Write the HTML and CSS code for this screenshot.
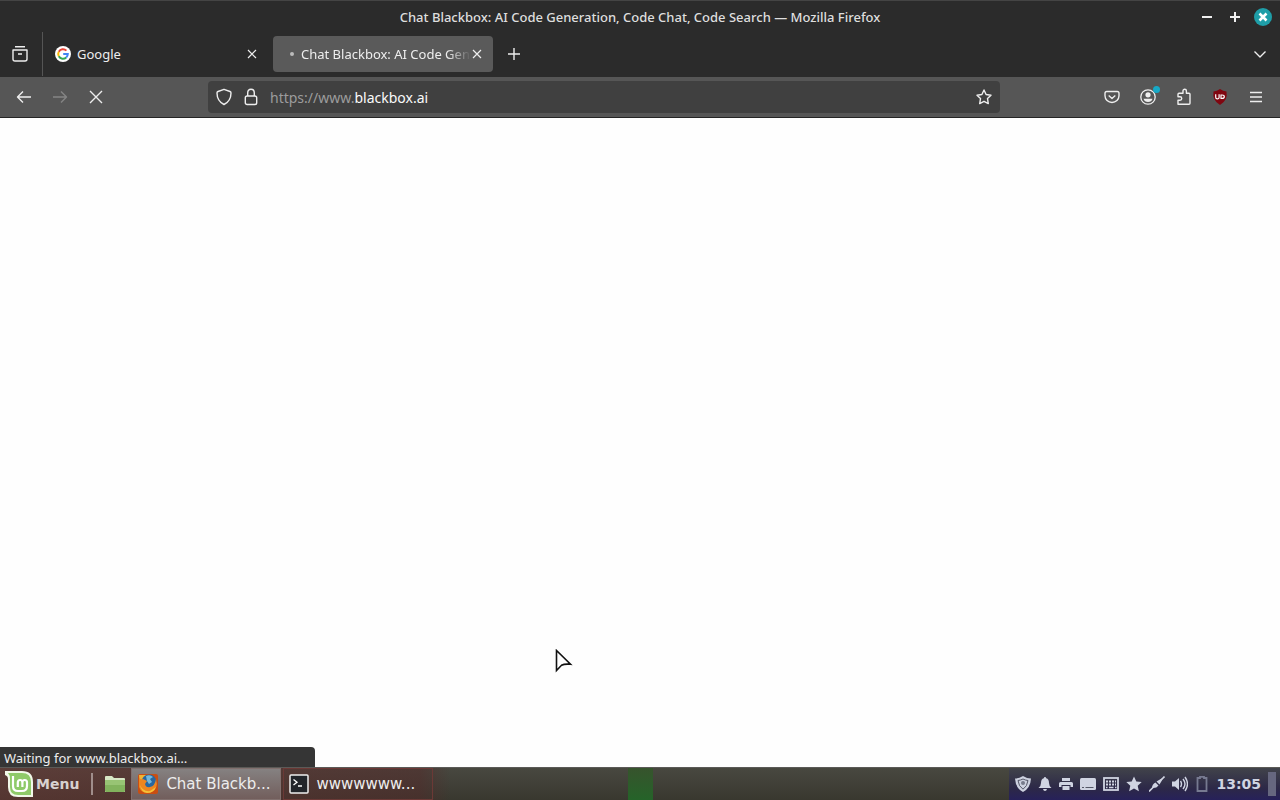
FILE: index.html
```html
<!DOCTYPE html>
<html lang="en">
<head>
<meta charset="utf-8">
<title>Chat Blackbox: AI Code Generation, Code Chat, Code Search</title>
<link rel="stylesheet" href="styles.css">
</head>
<body>
<div class="browser">
  <header class="titlebar">
    <h1 class="window-title">Chat Blackbox: AI Code Generation, Code Chat, Code Search — Mozilla Firefox</h1>
    <div class="window-controls">
      <button class="wc" aria-label="Minimize"><svg width="18" height="18" viewBox="0 0 18 18"><path d="M4 9h10" stroke="#eee" stroke-width="2"/></svg></button>
      <button class="wc" aria-label="Maximize"><svg width="18" height="18" viewBox="0 0 18 18"><path d="M4 9h10M9 4v10" stroke="#eee" stroke-width="2"/></svg></button>
      <button class="wc" aria-label="Close window"><svg width="18" height="18" viewBox="0 0 18 18"><circle cx="9" cy="9" r="9" fill="#1f9ea8"/><path d="M5.500 5.500l7 7M12.500 5.500l-7 7" stroke="#fff" stroke-width="2.600"/></svg></button>
    </div>
  </header>

  <nav class="tabstrip" aria-label="Tabs">
    <button class="recent" aria-label="Recent browsing"><svg width="18" height="18" viewBox="0 0 18 18" class="line"><path d="M4 1.800h10M2 5h14v9q0 2-2 2H4q-2 0-2-2zM7 9h4"/></svg></button>
    <div class="tab">
      <svg class="favicon" width="16" height="16" viewBox="0 0 16 16"><circle cx="8" cy="8" r="8" fill="#fff"/><g fill="none" stroke-width="2"><path d="M11.400 4.600A4.800 4.800 0 0 0 3.800 5.700" stroke="#ea4335"/><path d="M3.800 5.700a4.800 4.800 0 0 0 0 4.600" stroke="#fbbc05"/><path d="M3.800 10.300a4.800 4.800 0 0 0 7.400 1.200" stroke="#34a853"/><path d="M11.200 11.500A4.800 4.800 0 0 0 12.800 8H8.200" stroke="#4285f4"/></g></svg>
      <span class="tab-label">Google</span>
      <button class="tab-close" aria-label="Close Google tab"><svg width="10" height="10" viewBox="0 0 10 10" class="line"><path d="M1 1l8 8M9 1L1 9"/></svg></button>
    </div>
    <div class="tab active">
      <span class="loading"></span>
      <span class="tab-label faded">Chat Blackbox: AI Code Gen</span>
      <button class="tab-close" aria-label="Close Chat Blackbox tab"><svg width="10" height="10" viewBox="0 0 10 10" class="line"><path d="M1 1l8 8M9 1L1 9"/></svg></button>
    </div>
    <button class="new-tab" aria-label="New tab"><svg width="14" height="14" viewBox="0 0 14 14" class="line"><path d="M7 1v12M1 7h12"/></svg></button>
    <button class="all-tabs" aria-label="List all tabs"><svg width="14" height="14" viewBox="0 0 14 14" class="line"><path d="M1.500 4.500L7 10l5.500-5.500"/></svg></button>
  </nav>

  <div class="toolbar">
    <div class="nav-buttons">
      <button aria-label="Back"><svg width="16" height="16" viewBox="0 0 16 16" class="line"><path d="M15 8H1.500M7 2.500L1.500 8 7 13.500"/></svg></button>
      <button aria-label="Forward" disabled><svg width="16" height="16" viewBox="0 0 16 16" class="line"><path d="M1 8h13.500M9 2.500L14.500 8 9 13.500"/></svg></button>
      <button aria-label="Stop"><svg width="16" height="16" viewBox="0 0 16 16" class="line"><path d="M2 2l12 12M14 2L2 14"/></svg></button>
    </div>
    <div class="urlbar">
      <button aria-label="Tracking protection"><svg width="16" height="18" viewBox="0 0 16 18" class="line"><path d="M8 1.300l6 2.200q1 .4 1 1.500C15 10 12 14.500 8 16.500 4 14.500 1 10 1 5q0-1.100 1-1.500z"/></svg></button>
      <button aria-label="Site information"><svg width="14" height="18" viewBox="0 0 14 18" class="line"><rect x="1.300" y="8" width="11.400" height="8.500" rx="1.800"/><path d="M3.700 8V5q0-3.700 3.300-3.700T10.300 5v3"/></svg></button>
      <a class="address" href="#page"><span>https://www.</span>blackbox.ai</a>
      <button aria-label="Bookmark this page"><svg width="16" height="16" viewBox="0 0 16 16" class="line"><path d="M8 1l2.100 4.500 4.900.7-3.500 3.400.8 5L8 12.300l-4.300 2.300.8-5L1 6.200l4.900-.7z"/></svg></button>
    </div>
    <div class="tools">
      <button aria-label="Save to Pocket"><svg width="16" height="16" viewBox="0 0 16 16" class="line"><path d="M2.800 2.500h10.400q1.800 0 1.800 1.800v2.500a7 6.700 0 0 1-14 0V4.300q0-1.800 1.800-1.800zM4.700 6.500L8 9.500l3.300-3"/></svg></button>
      <button class="account" aria-label="Account"><svg width="16" height="16" viewBox="0 0 16 16"><circle cx="8" cy="8" r="7.200" fill="none" stroke="#eee" stroke-width="1.300"/><circle cx="8" cy="5.800" r="2.600" fill="#eee"/><path d="M3.500 9.800h9Q11.500 13 8 13T3.500 9.800z" fill="#eee"/></svg><span class="badge"></span></button>
      <button aria-label="Extensions"><svg width="16" height="18" viewBox="0 0 16 18" class="line"><path d="M2 16.200V12.300h2a1.700 1.700 0 0 0 0-3.500H2V6.300q0-1 1-1h4V3a1.700 1.700 0 0 1 3.400 0v2.300H13q1 0 1 1v9q0 .9-1 .9z"/></svg></button>
      <button aria-label="uBlock Origin"><svg width="16" height="16" viewBox="0 0 16 16"><path d="M8 0q3 2 6.500 2.500Q16 11.500 8 16 0 11.500 1.500 2.500 5 2 8 0z" fill="#800610"/><path d="M3.700 5.300v2.900q0 1.600 1.700 1.600T7.100 8.200V5.300M9 6h1q2.300 0 2.300 1.700T10 9.400H9z" fill="none" stroke="#fff" stroke-width="1.200"/></svg></button>
      <button aria-label="Application menu"><svg width="14" height="14" viewBox="0 0 14 14" class="line"><path d="M1 2.500h12M1 7h12M1 11.500h12"/></svg></button>
    </div>
  </div>

  <main class="page" id="page">
    <svg class="pointer" width="18" height="24" viewBox="0 0 18 24"><path d="M1.500 1.500v20l5-5.200q3-1.600 9-1z" fill="#fff" stroke="#111" stroke-width="1.600"/></svg>
    <div class="status" role="status">Waiting for www.blackbox.ai…</div>
  </main>
</div>

<footer class="taskbar">
  <button class="menu"><svg width="30" height="28" viewBox="0 0 30 28"><path d="M1 1h17q11 0 11 11v15H14Q4 27 4 17V9Q4 6 1 5z" fill="#f2f8e9"/><path d="M4 3h14q9 0 9 9v13H14q-8 0-8-8V9Q6 5 4 3z" fill="#8fca69"/><path d="M9 6v10q0 5 5 5h4q5 0 5-5v-3.500q0-2.500-2.300-2.500t-2.300 2.500V17v-4.500q0-2.500-2.300-2.500t-2.300 2.500V17" fill="none" stroke="#fff" stroke-width="2.200"/></svg>Menu</button>
  <span class="divider"></span>
  <button class="files" aria-label="Files"><svg width="22" height="20" viewBox="0 0 22 20"><path d="M1 3q0-1 1-1h6l2 2h10q1 0 1 1v13H1z" fill="#d7e7c5"/><path d="M1 6h20v11q0 1-1 1H2q-1 0-1-1z" fill="#82b35d"/><path d="M1 6h20v5H1z" fill="#98c474"/></svg></button>
  <button class="task current"><svg width="22" height="22" viewBox="0 0 22 22"><rect x="1" y="1" width="20" height="20" rx="2" fill="#c94e12"/><path d="M2 2h8L6 7 3 15z" fill="#efb434"/><circle cx="12" cy="9" r="7.500" fill="#2867a0"/><path d="M9 3q4-2 7 1l-3 2 2 3-3 2-2-3z" fill="#73b8dc"/><path d="M2 5q2 2 4 1l4 2-2 3q1 4 5 3 5-1 6-8 3 10-5 13-9 3-12-5z" fill="#ed8620"/><path d="M3 12q3 7 10 6l6-4q-2 6-9 6-6-1-7-8z" fill="#f5c239"/></svg><span>Chat Blackb...</span></button>
  <button class="task"><svg width="20" height="20" viewBox="0 0 20 20"><rect x="1" y="1" width="18" height="18" rx="1" fill="#22252a" stroke="#eee" stroke-width="1.500"/><path d="M4.500 5.500L8 8.200 4.500 11M9 12h4" fill="none" stroke="#fff" stroke-width="1.300"/></svg><span>wwwwwww...</span></button>
  <span class="load"></span>
  <div class="tray">
    <svg width="16" height="16" viewBox="0 0 16 16"><path d="M8 0q4 2.500 8 2.500Q15.500 12 8 16 .5 12 0 2.500 4 2.500 8 0z" fill="#cdd1df"/><path d="M8 3q2.500 1.300 5 1.500-.7 6-5 8.700-4.300-2.700-5-8.700Q5.500 4.300 8 3z" fill="none" stroke="#555767"/><circle cx="8" cy="7" r="2" fill="#777b8b"/></svg>
    <svg width="14" height="16" viewBox="0 0 14 16" class="fill"><path d="M7 1q1 0 1.200 1.300Q11 3 11 7q0 3 2.500 5H.5Q3 10 3 7q0-4 2.800-4.700Q6 1 7 1zM5 13h4q-.5 2-2 2t-2-2z"/></svg>
    <svg width="14" height="16" viewBox="0 0 14 16" class="fill"><path d="M3 2h8v3H3zM1.500 6h11Q14 6 14 7.500V11h-2.500V9h-9v2H0V7.500Q0 6 1.500 6zM3.500 10h7v4h-7z"/></svg>
    <svg width="16" height="16" viewBox="0 0 16 16"><rect y="2" width="16" height="12" rx="1.500" fill="#d0d4e2"/><path d="M2 11.500h2m1.500 0h8" stroke="#555867"/></svg>
    <svg width="16" height="16" viewBox="0 0 16 16"><rect x="1" y="2" width="14" height="12" fill="none" stroke="#d0d4e2" stroke-width="1.800"/><path d="M3 5.500h10M3 8.500h10" stroke="#d0d4e2" stroke-width="2" stroke-dasharray="2 1"/><path d="M3 11.500h1.500M6 11.500h4.500M12 11.500h1.500" stroke="#d0d4e2" stroke-width="1.600"/></svg>
    <svg width="16" height="16" viewBox="0 0 16 16" class="fill"><path d="M8 .5l2.300 5 5.400.6-4 3.700 1.200 5.500L8 12.500l-4.900 2.800 1.200-5.500-4-3.700 5.400-.6z"/></svg>
    <svg width="16" height="16" viewBox="0 0 16 16"><path d="M0 15.500l4.500-4.500M12 4l3.500-3.500" stroke="#d0d4e2" stroke-width="1.600"/><path d="M3 12q0-4 3.500-5.500L9.500 9.500Q7.500 12.500 3 12zM7.500 5.500L12.500 2.500l1 1-3 5z" fill="#d0d4e2"/></svg>
    <svg width="16" height="16" viewBox="0 0 16 16"><path d="M0 5.500h3L7 2v12l-4-3.500H0z" fill="#d0d4e2"/><path d="M8.500 5q2 3 0 6M11 3q4 5 0 10M13 1q5 7 0 14" fill="none" stroke="#d0d4e2" stroke-width="1.400"/></svg>
    <svg width="14" height="16" viewBox="0 0 14 16"><path d="M5 2V.8h4V2h2.500v13h-9V2z" fill="none" stroke="#777a91" stroke-width="1.800"/></svg>
    <time>13:05</time>
    <span class="desktop"></span>
  </div>
</footer>
</body>
</html>
```
FILE: styles.css
```css
* { box-sizing: border-box; }
body {
  margin: 0;
  height: 100vh;
  display: flex;
  flex-direction: column;
  overflow: hidden;
  font-family: "Noto Sans", "Open Sans", sans-serif;
  font-size: 13px;
  color: #eee;
}
button {
  display: flex;
  align-items: center;
  justify-content: center;
  padding: 0;
  border: 0;
  background: none;
  color: inherit;
  font: inherit;
}
svg { display: block; flex: none; }
.line { fill: none; stroke: #eee; stroke-width: 1.4; stroke-linejoin: round; }
.fill { fill: #d0d4e2; }
.browser { flex: 1; display: flex; flex-direction: column; min-height: 0; }

.titlebar {
  display: grid;
  grid-template-columns: 1fr auto 1fr;
  align-items: center;
  height: 32px;
  border-top: 1px solid #444;
  background: #2b2b2b;
}
.window-title { grid-column: 2; margin: 0; font-size: 13px; font-weight: 500; color: #dedede; }
.window-controls { display: flex; justify-content: flex-end; gap: 10px; padding-right: 8px; }

.tabstrip { display: flex; align-items: center; height: 45px; padding-bottom: 1px; background: #2b2b2b; }
.recent { width: 43px; height: 44px; padding-right: 2px; border-right: 1px solid #555; }
.tab { display: flex; align-items: center; width: 220px; height: 36px; padding: 0 5px 0 12px; }
.tab.active { margin-left: 10px; padding: 0 10px 0 17px; border-radius: 4px; background: #5a5a5a; }
.favicon { margin-right: 6px; }
.tab-label { flex: 1; white-space: nowrap; }
.faded { mask-image: linear-gradient(to right, #000 86%, transparent); }
.loading { width: 4px; height: 4px; margin-right: 7px; border-radius: 50%; background: #bbb; }
.tab-close { width: 12px; height: 20px; }
.tab-close .line { stroke-width: 1.2; }
.new-tab { width: 42px; height: 36px; }
.all-tabs { width: 40px; height: 36px; margin-left: auto; }

.toolbar {
  display: grid;
  grid-template-columns: 208px 1fr 280px;
  align-items: center;
  height: 41px;
  border-bottom: 1px solid #252525;
  background: #565656;
}
.nav-buttons { display: flex; padding-left: 6px; }
.nav-buttons button, .tools button { width: 36px; height: 36px; }
button:disabled { opacity: 0.3; }
.urlbar {
  display: flex;
  align-items: center;
  gap: 12px;
  height: 32px;
  padding: 0 8px;
  border-radius: 4px;
  background: #404040;
}
.address { flex: 1; color: #fafafa; font-size: 14px; text-decoration: none; }
.address span { color: #9c9c9c; }
.tools { display: flex; justify-content: flex-end; padding-right: 6px; }
.account { position: relative; }
.badge { position: absolute; top: 7px; right: 6px; width: 7px; height: 7px; border-radius: 50%; background: #16a9c7; }

.page { position: relative; flex: 1; background: #fefefe; }
.pointer { position: absolute; left: 555px; top: 531px; }
.status {
  position: absolute;
  left: 0;
  bottom: 0;
  width: 315px;
  height: 20px;
  padding-left: 4px;
  border-top-right-radius: 4px;
  background: #353535;
  line-height: 22px;
}

.taskbar {
  position: relative;
  display: flex;
  align-items: center;
  height: 33px;
  border-top: 1px solid #5b5a57;
  background: linear-gradient(to right, #70333280 0, #54292980 420px, transparent 450px), linear-gradient(#484840, #39382f);
  font-family: "DejaVu Sans", sans-serif;
  font-size: 14px;
  color: #ededed;
}
.menu { padding-left: 4px; gap: 2px; font-weight: bold; color: #d8d2d0; }
.divider { width: 2px; height: 22px; margin-left: 12px; background: #a08e8b; }
.files { width: 38px; padding-left: 6px; }
.task { width: 150px; height: 32px; justify-content: flex-start; gap: 7px; padding-left: 5px; border: 1px solid #6b3936; font-size: 15px; }
.task.current { border-color: #81706e; background: linear-gradient(#858181, #725e5c); }
.task + .task { margin-left: 2px; }
.load { position: absolute; left: 628px; top: 0; width: 25px; height: 32px; background: linear-gradient(#37532d, #256329); }
.tray {
  display: flex;
  align-items: center;
  gap: 7px;
  height: 32px;
  margin-left: auto;
  padding-left: 6px;
  background: linear-gradient(#41434a, #2c2848 65%, #27215a);
}
.tray time { font-weight: bold; color: #d0d4e2; }
.desktop { width: 8px; height: 24px; margin-right: 4px; background: #66677f; }
```
